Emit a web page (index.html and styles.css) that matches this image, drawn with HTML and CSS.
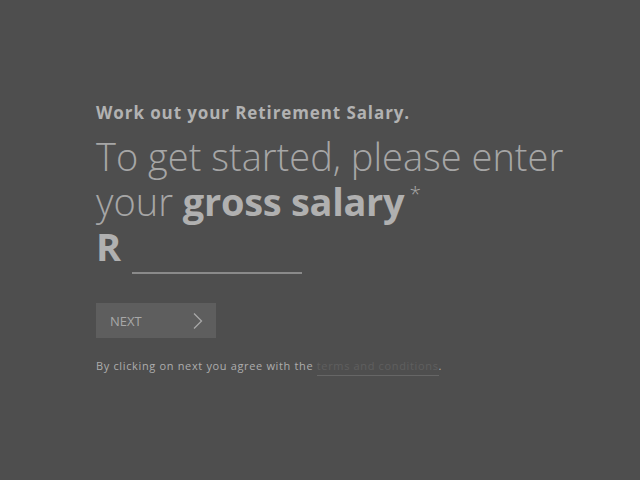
FILE: index.html
```html
<!DOCTYPE html>
<html>
<head>
<meta charset="utf-8">
<link rel="stylesheet" href="styles.css">
</head>
<body>
<main class="wrap">
  <h1 class="kicker">Work out your Retirement Salary.</h1>
  <p class="prompt">To get started, please enter<br>your <strong>gross salary</strong><sup class="star">*</sup></p>
  <div class="amount">
    <span class="currency">R</span>
    <span class="field"></span>
  </div>
  <button class="next" type="button">
    <span>NEXT</span>
    <svg class="chev" width="12" height="18" viewBox="0 0 12 18"><path d="M2 1.5 L9.5 9 L2 16.5" fill="none" stroke="#a8a8a8" stroke-width="1.3"/></svg>
  </button>
  <p class="legal">By clicking on next you agree with the <a class="terms" href="#">terms and conditions</a>.</p>
</main>
</body>
</html>
```
FILE: styles.css
```css
html, body {
  margin: 0;
  padding: 0;
  background: #4e4e4e;
  height: 100%;
}
body {
  font-family: "Open Sans", "Liberation Sans", sans-serif;
  color: #a9a9a9;
}
.wrap {
  padding: 101px 0 0 96px;
  display: flex;
  flex-direction: column;
  align-items: flex-start;
}
.kicker {
  margin: 0;
  font-size: 17px;
  font-weight: 700;
  letter-spacing: 0.9px;
  line-height: 24px;
  color: #b2b2b2;
}
.prompt {
  margin: 9px 0 0;
  font-size: 38px;
  font-weight: 300;
  line-height: 45px;
  color: #a6a6a6;
}
.prompt strong {
  font-weight: 700;
  letter-spacing: -0.3px;
  color: #b0b0b0;
}
.star {
  font-size: 21px;
  font-weight: 300;
  vertical-align: top;
  line-height: 18px;
  position: relative;
  top: 5px;
  margin-left: 5px;
}
.amount {
  display: flex;
  align-items: flex-end;
  height: 45px;
}
.currency {
  font-size: 38px;
  font-weight: 700;
  line-height: 45px;
  color: #b0b0b0;
}
.field {
  width: 170px;
  height: 0;
  border-bottom: 2px solid #8a8a8a;
  margin: 0 0 -5px 11px;
}
.next {
  margin-top: 34px;
  width: 120px;
  height: 35px;
  border: 0;
  background: #5e5e5e;
  display: flex;
  align-items: center;
  justify-content: space-between;
  padding: 0 12px 0 14px;
  font-family: inherit;
  font-size: 13px;
  color: #a8a8a8;
  letter-spacing: 0;
}
.legal {
  margin: 20px 0 0;
  font-size: 11px;
  letter-spacing: 0.65px;
  color: #adadad;
}
.terms {
  color: #5f5f5f;
  text-decoration: none;
  display: inline-block;
  padding-bottom: 2px;
  border-bottom: 1px solid #666;
  line-height: 14px;
}
```
